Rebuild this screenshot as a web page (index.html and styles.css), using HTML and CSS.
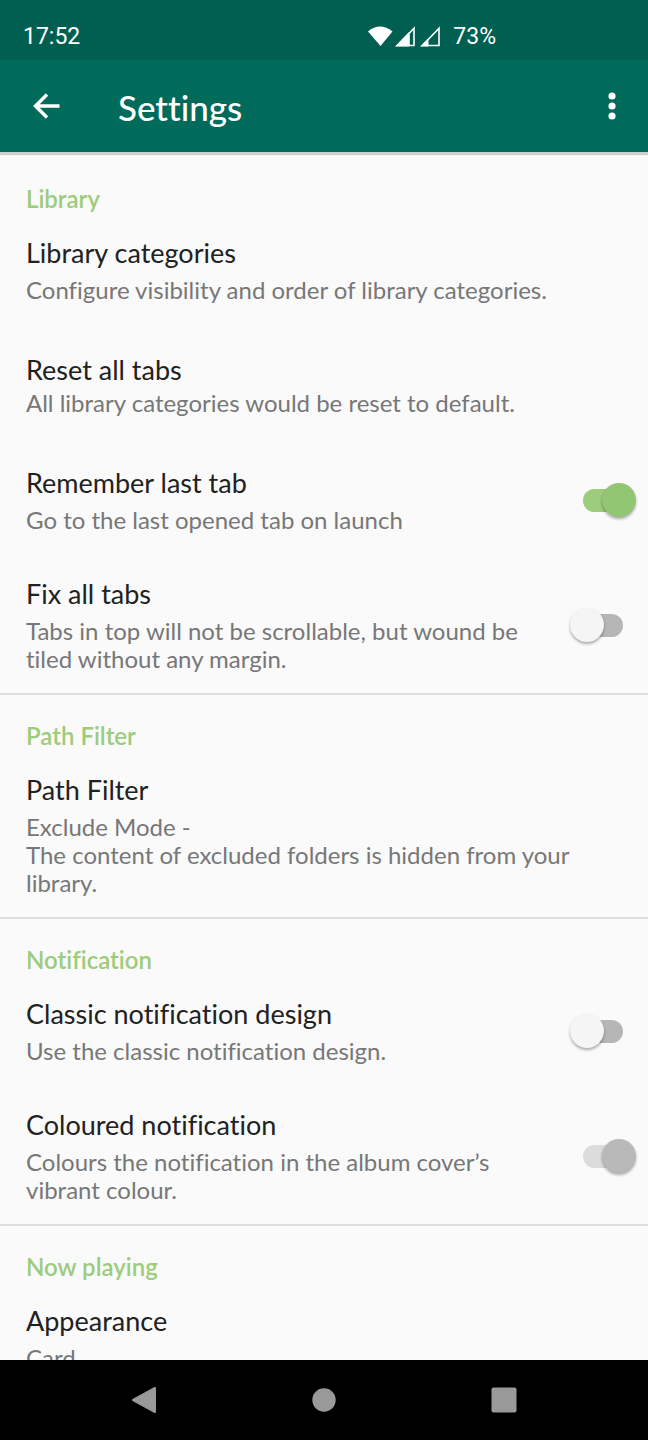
FILE: index.html
```html
<!DOCTYPE html>
<html lang="en">
<head>
<meta charset="utf-8">
<meta name="viewport" content="width=device-width, initial-scale=1">
<title>Settings</title>
<link rel="stylesheet" href="styles.css">
</head>
<body>
<div class="status-bar">
  <span>17:52</span>
  <div class="status-right">
    <svg class="signals" viewBox="0 0 72 24" aria-hidden="true">
      <path d="M0 6.500Q12-3.500 24.500 6.500L12.500 21Z" fill="currentColor"/>
      <path d="M29.500 20.500 46 3.200V20.500ZM41 20.500V9" fill="none" stroke="currentColor" stroke-width="1.600"/>
      <path d="M27 21.500 41 7V21.500Z" fill="currentColor"/>
      <path d="M54.500 20.500 71 3.200V20.500Z" fill="none" stroke="currentColor" stroke-width="1.600"/>
      <path d="M52 21.500 60.500 13V21.500Z" fill="currentColor"/>
    </svg>
    <span>73%</span>
  </div>
</div>
<header class="app-bar">
  <button class="icon-button" type="button" aria-label="Back">
    <svg class="icon" viewBox="0 0 32 32" aria-hidden="true"><path d="M29.500 16H5M17 4.500 5.500 16 17 27.500" fill="none" stroke="currentColor" stroke-width="3.400"/></svg>
  </button>
  <h1 class="app-title">Settings</h1>
  <button class="icon-button" type="button" aria-label="More options">
    <svg class="icon" viewBox="0 0 32 32" aria-hidden="true"><g fill="currentColor"><circle cx="16" cy="6" r="3.600"/><circle cx="16" cy="16" r="3.600"/><circle cx="16" cy="26" r="3.600"/></g></svg>
  </button>
</header>
<main class="settings">
  <section class="group">
    <h2 class="group-title">Library</h2>
    <a class="item item-tall" href="#categories">
      <span class="text"><span class="title">Library categories</span><span class="summary">Configure visibility and order of library categories.</span></span>
    </a>
    <a class="item item-tall item-tight" href="#reset">
      <span class="text"><span class="title">Reset all tabs</span><span class="summary">All library categories would be reset to default.</span></span>
    </a>
    <label class="item">
      <span class="text"><span class="title">Remember last tab</span><span class="summary">Go to the last opened tab on launch</span></span>
      <input class="switch" type="checkbox" checked>
    </label>
    <label class="item">
      <span class="text"><span class="title">Fix all tabs</span><span class="summary">Tabs in top will not be scrollable, but wound be tiled without any margin.</span></span>
      <input class="switch" type="checkbox">
    </label>
  </section>
  <section class="group">
    <h2 class="group-title">Path Filter</h2>
    <a class="item" href="#path-filter">
      <span class="text"><span class="title">Path Filter</span><span class="summary">Exclude Mode -<br>The content of excluded folders is hidden from your library.</span></span>
    </a>
  </section>
  <section class="group">
    <h2 class="group-title">Notification</h2>
    <label class="item">
      <span class="text"><span class="title">Classic notification design</span><span class="summary">Use the classic notification design.</span></span>
      <input class="switch" type="checkbox">
    </label>
    <label class="item">
      <span class="text"><span class="title">Coloured notification</span><span class="summary">Colours the notification in the album cover’s vibrant colour.</span></span>
      <input class="switch" type="checkbox" checked disabled>
    </label>
  </section>
  <section class="group">
    <h2 class="group-title">Now playing</h2>
    <a class="item" href="#appearance">
      <span class="text"><span class="title">Appearance</span><span class="summary">Card</span></span>
    </a>
  </section>
</main>
<nav class="nav-bar" aria-label="System">
  <button class="nav-button" type="button" aria-label="Back"><svg class="nav-icon" viewBox="0 0 28 28" aria-hidden="true"><path d="M3 14 25 2V26Z" fill="currentColor" stroke="currentColor" stroke-width="2" stroke-linejoin="round"/></svg></button>
  <button class="nav-button" type="button" aria-label="Home"><svg class="nav-icon" viewBox="0 0 28 28" aria-hidden="true"><circle cx="14" cy="14" r="11.700" fill="currentColor"/></svg></button>
  <button class="nav-button" type="button" aria-label="Recent apps"><svg class="nav-icon" viewBox="0 0 28 28" aria-hidden="true"><rect x="1.500" y="1.500" width="25" height="25" rx="2" fill="currentColor"/></svg></button>
</nav>
</body>
</html>
```
FILE: styles.css
```css
* { box-sizing: border-box; }

body {
  margin: 0;
  height: 100vh;
  display: flex;
  flex-direction: column;
  background: #fafafa;
  color: #212121;
  font-family: Lato, "Open Sans", sans-serif;
  font-variant-ligatures: none;
}

button {
  display: flex;
  align-items: center;
  justify-content: center;
  padding: 0;
  border: 0;
  background: none;
  color: inherit;
}

.status-bar {
  flex: none;
  display: flex;
  justify-content: space-between;
  align-items: center;
  height: 60px;
  padding: 14px 152px 0 23px;
  background: #005f51;
  color: #fff;
  font-family: Roboto, sans-serif;
  font-size: 23px;
  line-height: 28px;
}

.status-right { display: flex; align-items: center; gap: 13px; }
.signals { width: 72px; height: 24px; }

.app-bar {
  position: relative;
  flex: none;
  display: flex;
  align-items: center;
  height: 92px;
  padding: 0 20px 0 30px;
  background: #006a5b;
  color: #fff;
  box-shadow: 0 3px 1px #cfcfcf;
}

.icon-button { width: 32px; height: 48px; }
.icon { width: 32px; height: 32px; }
.app-title { flex: 1; margin: 2px 0 0 56px; font-size: 35px; line-height: 40px; font-weight: 500; }

.settings { flex: 1; min-height: 0; overflow: hidden; padding-top: 6px; }
.group + .group { border-top: 2px solid #dedede; }
.group-title {
  margin: 0;
  padding: 27px 26px 0;
  color: #9ccc7c;
  font-size: 24px;
  line-height: 28px;
  font-weight: 600;
}

.item {
  display: flex;
  align-items: center;
  gap: 32px;
  padding: 24px 25px 20px 26px;
  color: inherit;
  text-decoration: none;
}
.item-tall { padding-bottom: 26px; }
.text { flex: 1; display: flex; flex-direction: column; gap: 7px; }
.item-tight .text { gap: 3px; }
.title { font-size: 27px; line-height: 32px; }
.summary { color: #777; font-size: 24px; line-height: 28px; }

.switch {
  appearance: none;
  position: relative;
  flex: none;
  width: 40px;
  height: 23px;
  margin: 0;
  border-radius: 12px;
  background: #b6b6b6;
}
.switch::before {
  content: "";
  position: absolute;
  top: -6px;
  left: -13px;
  width: 34px;
  height: 34px;
  border-radius: 50%;
  background: #f5f5f5;
  box-shadow: 0 2px 3px rgb(0 0 0 / 32%);
}
.switch:checked { background: #9ccc7c; }
.switch:checked::before { left: 19px; background: #93c673; }
.switch:disabled { background: #dcdcdc; }
.switch:disabled::before { background: #b9b9b9; }

.nav-bar {
  flex: none;
  display: flex;
  justify-content: center;
  align-items: center;
  gap: 132px;
  height: 80px;
  background: #000;
  color: #999;
}
.nav-button { width: 48px; height: 48px; }
.nav-icon { width: 28px; height: 28px; }
```
